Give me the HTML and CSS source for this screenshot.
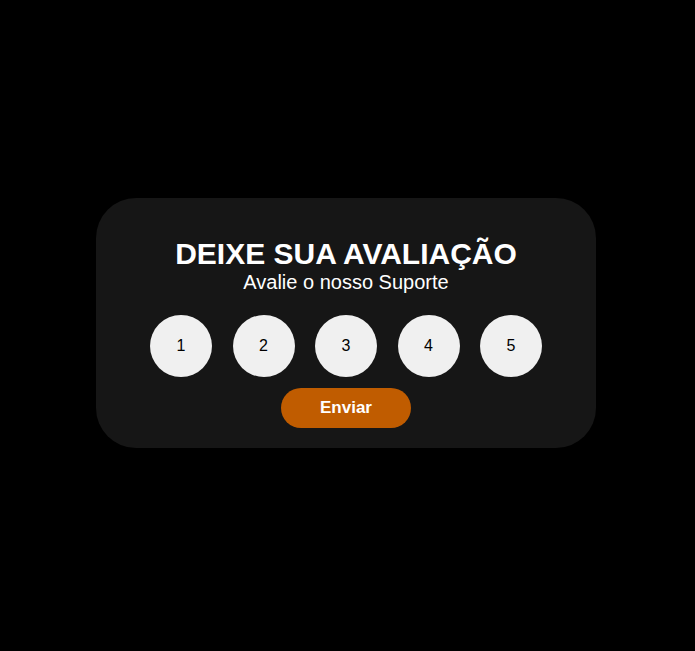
FILE: index.html
```html
<!DOCTYPE html>
<html lang="pt">
<head>
<meta charset="utf-8">
<link rel="stylesheet" href="styles.css">
</head>
<body>
<div class="card">
  <h1 class="title">DEIXE SUA AVALIAÇÃO</h1>
  <p class="subtitle">Avalie o nosso Suporte</p>
  <div class="rating">
    <button class="rate">1</button>
    <button class="rate">2</button>
    <button class="rate">3</button>
    <button class="rate">4</button>
    <button class="rate">5</button>
  </div>
  <button class="send">Enviar</button>
</div>
</body>
</html>
```
FILE: styles.css
```css
html, body {
  margin: 0;
  padding: 0;
  background: #000;
}
body {
  min-height: 100vh;
  display: flex;
  align-items: center;
  justify-content: center;
  padding-right: 3px;
  padding-bottom: 5px;
  box-sizing: border-box;
  font-family: "Liberation Sans", Arial, sans-serif;
}
.card {
  width: 500px;
  height: 250px;
  box-sizing: border-box;
  background: #161616;
  border-radius: 40px;
  padding-top: 39px;
  display: flex;
  flex-direction: column;
  align-items: center;
}
.title {
  margin: 0;
  font-size: 30px;
  line-height: 34px;
  font-weight: bold;
  color: #fff;
}
.subtitle {
  margin: 0;
  font-size: 20px;
  line-height: 23px;
  color: #fff;
}
.rating {
  display: flex;
  gap: 20.5px;
  margin-top: 21px;
}
.rate {
  width: 62px;
  height: 62px;
  border: none;
  border-radius: 50%;
  background: #f0f0f0;
  color: #000;
  font-family: "Liberation Sans", Arial, sans-serif;
  font-size: 16px;
  padding: 0;
}
.send {
  margin-top: 11px;
  width: 130px;
  height: 40px;
  border: none;
  border-radius: 20px;
  background: #c05c00;
  color: #fff;
  font-family: "Liberation Sans", Arial, sans-serif;
  font-size: 17px;
  font-weight: bold;
  padding: 0;
}
```
